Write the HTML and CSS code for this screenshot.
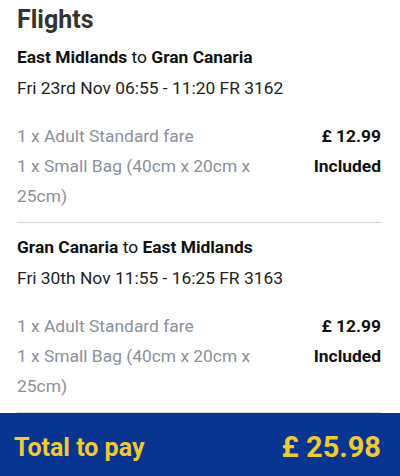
FILE: index.html
```html
<!DOCTYPE html>
<html>
<head>
<meta charset="utf-8">
<link rel="stylesheet" href="styles.css">
</head>
<body>
<div class="summary">
  <h1 class="title">Flights</h1>
  <section class="flight">
    <div class="route"><b>East Midlands</b> to <b>Gran Canaria</b></div>
    <div class="times">Fri 23rd Nov 06:55 - 11:20 FR 3162</div>
    <div class="items">
      <div class="item"><span class="label">1 x Adult Standard fare</span><span class="value">£ 12.99</span></div>
      <div class="item"><span class="label">1 x Small Bag (40cm x 20cm x 25cm)</span><span class="value">Included</span></div>
    </div>
  </section>
  <section class="flight">
    <div class="route"><b>Gran Canaria</b> to <b>East Midlands</b></div>
    <div class="times">Fri 30th Nov 11:55 - 16:25 FR 3163</div>
    <div class="items">
      <div class="item"><span class="label">1 x Adult Standard fare</span><span class="value">£ 12.99</span></div>
      <div class="item"><span class="label">1 x Small Bag (40cm x 20cm x 25cm)</span><span class="value">Included</span></div>
    </div>
  </section>
  <div class="total">
    <span class="total-label">Total to pay</span>
    <span class="total-value">£ 25.98</span>
  </div>
</div>
</body>
</html>
```

FILE: styles.css
```css
html, body {
  margin: 0;
  padding: 0;
  background: #fff;
}
body {
  font-family: Roboto, "Liberation Sans", sans-serif;
  color: #1a1a1a;
}
.summary {
  width: 400px;
}
.title {
  margin: 0;
  padding: 3px 17px 0;
  font-size: 25px;
  line-height: 34px;
  font-weight: 700;
  color: #333;
}
.flight {
  margin: 0 19px 0 17px;
  border-bottom: 1px solid #d6d6d6;
  padding-bottom: 11px;
}
.flight + .flight {
  padding-top: 4px;
}
.route {
  font-size: 17.4px;
  line-height: 30px;
  padding-top: 5px;
  color: #111;
}
.route b {
  font-weight: 700;
}
.times {
  font-size: 17.4px;
  line-height: 32px;
  color: #222;
}
.items {
  padding-top: 17px;
}
.item {
  display: flex;
  justify-content: space-between;
  gap: 20px;
  font-size: 17.4px;
  line-height: 30px;
}
.label {
  color: #8a909c;
  max-width: 270px;
}
.value {
  font-weight: 700;
  color: #111;
  white-space: nowrap;
}
.total {
  display: flex;
  justify-content: space-between;
  align-items: center;
  background: #073590;
  color: #f1c933;
  height: 63px;
  padding: 0 19px 0 14px;
  font-weight: 700;
}
.total-label {
  font-size: 25px;
  padding-top: 6px;
}
.total-value {
  font-size: 29px;
  padding-top: 4px;
}
```
